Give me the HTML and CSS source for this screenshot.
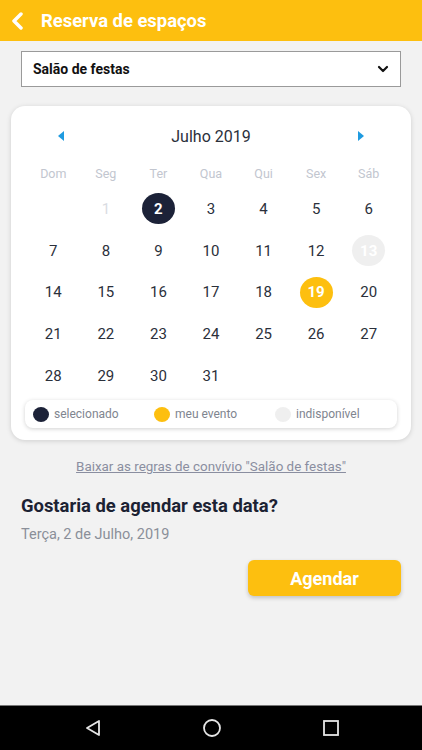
FILE: index.html
```html
<!DOCTYPE html>
<html>
<head>
<meta charset="UTF-8">
<title>Reserva de espaços</title>
<link rel="stylesheet" href="styles.css">
</head>
<body>

<div class="screen">
  <div class="topbar">
    <svg class="back" width="14" height="18" viewBox="0 0 14 18">
      <path d="M11 2 L4 9 L11 16" fill="none" stroke="#fff" stroke-width="3.5" stroke-linecap="round" stroke-linejoin="round"/>
    </svg>
    <span class="title">Reserva de espaços</span>
  </div>

  <div class="content">
    <div class="select">
      <span>Salão de festas</span>
      <svg width="12" height="8" viewBox="0 0 12 8">
        <path d="M2 2 L6 6 L10 2" fill="none" stroke="#111" stroke-width="2.2" stroke-linecap="round" stroke-linejoin="round"/>
      </svg>
    </div>

    <div class="card">
      <div class="month">
        <svg width="8" height="10" viewBox="0 0 8 10"><path d="M7 0 L1 5 L7 10 Z" fill="#1f9be0"/></svg>
        <span>Julho 2019</span>
        <svg width="8" height="10" viewBox="0 0 8 10"><path d="M1 0 L7 5 L1 10 Z" fill="#1f9be0"/></svg>
      </div>

      <div class="grid weekdays">
        <div>Dom</div><div>Seg</div><div>Ter</div><div>Qua</div><div>Qui</div><div>Sex</div><div>Sáb</div>
      </div>

      <div class="grid days">
        <div></div>
        <div class="past">1</div>
        <div><span class="dot selected">2</span></div>
        <div>3</div><div>4</div><div>5</div><div>6</div>
        <div>7</div><div>8</div><div>9</div><div>10</div><div>11</div><div>12</div>
        <div><span class="dot blocked">13</span></div>
        <div>14</div><div>15</div><div>16</div><div>17</div><div>18</div>
        <div><span class="dot mine">19</span></div>
        <div>20</div>
        <div>21</div><div>22</div><div>23</div><div>24</div><div>25</div><div>26</div><div>27</div>
        <div>28</div><div>29</div><div>30</div><div>31</div>
      </div>

      <div class="legend">
        <div class="item"><span class="ball navy"></span>selecionado</div>
        <div class="item"><span class="ball yellow"></span>meu evento</div>
        <div class="item"><span class="ball grey"></span>indisponível</div>
      </div>
    </div>

    <a class="rules" href="#">Baixar as regras de convívio "Salão de festas"</a>

    <h3 class="question">Gostaria de agendar esta data?</h3>
    <div class="date">Terça, 2 de Julho, 2019</div>

    <div class="actions">
      <button>Agendar</button>
    </div>
  </div>

  <div class="navbar">
    <svg width="18" height="18" viewBox="0 0 18 18">
      <path d="M15 2 L3 9 L15 16 Z" fill="none" stroke="#e6e6e6" stroke-width="1.8" stroke-linejoin="round"/>
    </svg>
    <svg width="20" height="20" viewBox="0 0 20 20">
      <circle cx="10" cy="10" r="8" fill="none" stroke="#e6e6e6" stroke-width="1.8"/>
    </svg>
    <svg width="18" height="18" viewBox="0 0 18 18">
      <rect x="2" y="2" width="14" height="14" fill="none" stroke="#e6e6e6" stroke-width="1.8"/>
    </svg>
  </div>
</div>

</body>
</html>
```

FILE: styles.css
```css
body {
  margin: 0;
  background-color: #f2f2f2;
  font-family: Roboto, "Noto Sans", sans-serif;
}

.screen {
  width: 422px;
  height: 750px;
  display: flex;
  flex-direction: column;
}

.topbar {
  height: 41px;
  background-color: #fdbf0f;
  display: flex;
  align-items: center;
  padding-left: 10px;
  box-sizing: border-box;
}

.back {
  margin-right: 17px;
}

.title {
  color: #fff;
  font-size: 18.4px;
  font-weight: bold;
}

.content {
  flex: 1;
  padding: 10px 21px 0 21px;
}

.select {
  height: 36px;
  background-color: #fff;
  border: 1px solid #9a9a9a;
  box-sizing: border-box;
  display: flex;
  align-items: center;
  justify-content: space-between;
  padding: 0 11px 0 11px;
  font-size: 14px;
  font-weight: bold;
  color: #111;
}

.card {
  margin: 19px -10px 0 -10px;
  background-color: #fff;
  border-radius: 14px;
  box-shadow: 0 1px 5px rgba(0, 0, 0, 0.15);
  padding: 12px 14px 12px 14px;
}

.month {
  display: flex;
  align-items: center;
  justify-content: space-between;
  padding: 0 32px 0 32px;
  height: 36px;
  font-size: 16px;
  color: #2b303b;
}

.grid {
  display: grid;
  grid-template-columns: repeat(7, 1fr);
  margin: 0 2px;
  text-align: center;
}

.weekdays {
  height: 30px;
  margin-top: 4px;
  align-items: center;
  font-size: 12.5px;
  color: #c2c6cf;
}

.days div {
  height: 41.7px;
  display: flex;
  align-items: center;
  justify-content: center;
  font-size: 15px;
  color: #2b303b;
}

.days .past {
  color: #d9dce2;
}

.dot {
  width: 33px;
  height: 31px;
  border-radius: 50%;
  display: flex;
  align-items: center;
  justify-content: center;
  font-weight: bold;
  color: #fff;
}

.selected {
  background-color: #1c2238;
}

.mine {
  background-color: #fdbf0f;
}

.blocked {
  background-color: #efefef;
}

.legend {
  margin: 4px 0 0 0;
  height: 28px;
  border-radius: 8px;
  box-shadow: 0 1px 4px rgba(0, 0, 0, 0.18);
  display: grid;
  grid-template-columns: 121px 121px 1fr;
  align-items: center;
  padding-left: 8px;
  font-size: 12px;
  color: #80858f;
}

.item {
  display: flex;
  align-items: center;
}

.ball {
  width: 16px;
  height: 15px;
  border-radius: 50%;
  margin-right: 5px;
}

.navy { background-color: #1c2238; }
.yellow { background-color: #fdbf0f; }
.grey { background-color: #efefef; }

.rules {
  display: block;
  text-align: center;
  margin-top: 19px;
  font-size: 13.4px;
  color: #8a8ea0;
}

.question {
  margin: 21px 0 0 0;
  font-size: 18.4px;
  color: #1c2233;
}

.date {
  margin-top: 10px;
  font-size: 14.5px;
  color: #8a8f99;
}

.actions {
  display: flex;
  justify-content: flex-end;
  margin-top: 17px;
}

button {
  width: 153px;
  height: 36px;
  background-color: #fdbf0f;
  color: white;
  border: none;
  border-radius: 6px;
  font-family: Roboto, sans-serif;
  font-size: 18px;
  font-weight: bold;
  box-shadow: 0 2px 4px rgba(0, 0, 0, 0.2);
}

.navbar {
  height: 44px;
  background-color: #000;
  border-top: 1px solid #777;
  display: flex;
  align-items: center;
  gap: 100px;
  padding-left: 84px;
}
```
